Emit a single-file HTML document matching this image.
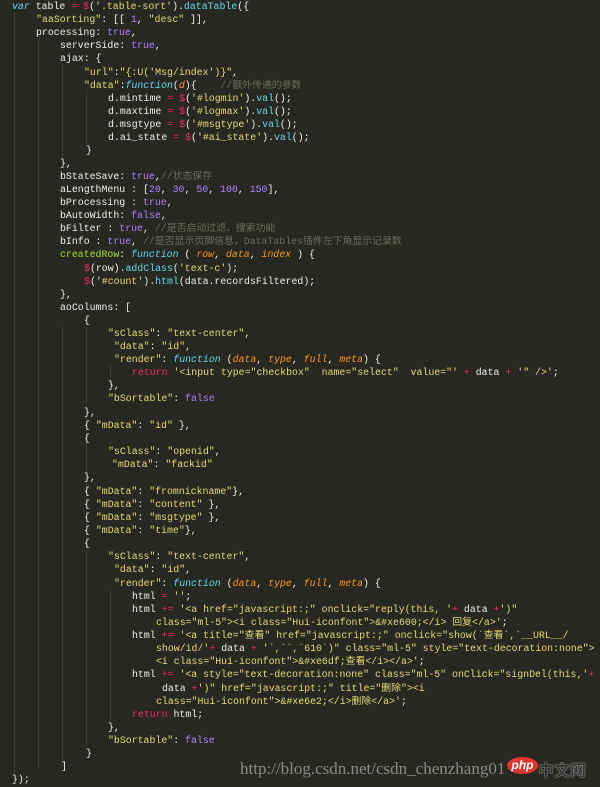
<!DOCTYPE html>
<html><head><meta charset="utf-8"><style>
html,body{margin:0;padding:0;}
body{width:600px;height:787px;background:#272822;overflow:hidden;position:relative;font-family:"Liberation Mono","Noto Sans CJK SC",monospace;font-size:9.9px;color:#f0f0e8;}
.l{position:absolute;white-space:pre;height:13px;line-height:13px;}
.k{color:#66d9ef;font-style:italic}
.f{color:#66d9ef}
.s{color:#e6db74}
.n{color:#ae81ff}
.o{color:#f92672}
.c{color:#6f6c5e}
.p{color:#fd971f;font-style:italic}
.g{color:#a6e22e}
.guide{position:absolute;width:1px;background:#3a3b35;}
.wm{position:absolute;left:240px;top:759px;font-family:"Liberation Serif",serif;font-size:17px;color:#8a8a86;white-space:pre;}
</style></head><body>
<div class="guide" style="left:14px;top:12px;height:764px"></div>
<div class="guide" style="left:38px;top:38px;height:730px"></div>
<div class="guide" style="left:62px;top:64px;height:95px"></div>
<div class="guide" style="left:86px;top:90px;height:55px"></div>
<div class="guide" style="left:62px;top:326px;height:440px"></div>
<div class="guide" style="left:86px;top:326px;height:420px"></div>
<div class="guide" style="left:110px;top:365px;height:20px"></div>
<div class="guide" style="left:110px;top:590px;height:130px"></div>

<div class="l" style="left:12px;top:0px"><span class="k">var</span> table <span class="o">=</span> <span class="o">$</span>(<span class="s">'.table-sort'</span>).<span class="f">dataTable</span>({</div>
<div class="l" style="left:36px;top:13px"><span class="s">"aaSorting"</span>: [[ <span class="n">1</span>, <span class="s">"desc"</span> ]],</div>
<div class="l" style="left:36px;top:26px">processing: <span class="n">true</span>,</div>
<div class="l" style="left:60px;top:39px">serverSide: <span class="n">true</span>,</div>
<div class="l" style="left:60px;top:52px">ajax: {</div>
<div class="l" style="left:84px;top:66px"><span class="s">"url"</span>:<span class="s">"{:U('Msg/index')}"</span>,</div>
<div class="l" style="left:84px;top:79px"><span class="s">"data"</span>:<span class="k">function</span>(<span class="p">d</span>){    <span class="c">//额外传递的参数</span></div>
<div class="l" style="left:108px;top:92px">d.mintime <span class="o">=</span> <span class="o">$</span>(<span class="s">'#logmin'</span>).<span class="f">val</span>();</div>
<div class="l" style="left:108px;top:105px">d.maxtime <span class="o">=</span> <span class="o">$</span>(<span class="s">'#logmax'</span>).<span class="f">val</span>();</div>
<div class="l" style="left:108px;top:118px">d.msgtype <span class="o">=</span> <span class="o">$</span>(<span class="s">'#msgtype'</span>).<span class="f">val</span>();</div>
<div class="l" style="left:108px;top:131px">d.ai_state <span class="o">=</span> <span class="o">$</span>(<span class="s">'#ai_state'</span>).<span class="f">val</span>();</div>
<div class="l" style="left:86px;top:144px">}</div>
<div class="l" style="left:60px;top:157px">},</div>
<div class="l" style="left:60px;top:170px">bStateSave: <span class="n">true</span>,<span class="c">//状态保存</span></div>
<div class="l" style="left:60px;top:183px">aLengthMenu : [<span class="n">20</span>, <span class="n">30</span>, <span class="n">50</span>, <span class="n">100</span>, <span class="n">150</span>],</div>
<div class="l" style="left:60px;top:196px">bProcessing : <span class="n">true</span>,</div>
<div class="l" style="left:60px;top:209px">bAutoWidth: <span class="n">false</span>,</div>
<div class="l" style="left:60px;top:222px">bFilter : <span class="n">true</span>, <span class="c">//是否启动过滤、搜索功能</span></div>
<div class="l" style="left:60px;top:235px">bInfo : <span class="n">true</span>, <span class="c">//是否显示页脚信息，DataTables插件左下角显示记录数</span></div>
<div class="l" style="left:60px;top:248px"><span class="g">createdRow</span>: <span class="k">function</span> ( <span class="p">row</span>, <span class="p">data</span>, <span class="p">index</span> ) {</div>
<div class="l" style="left:84px;top:262px"><span class="o">$</span>(row).<span class="f">addClass</span>(<span class="s">'text-c'</span>);</div>
<div class="l" style="left:84px;top:275px"><span class="o">$</span>(<span class="s">'#count'</span>).<span class="f">html</span>(data.recordsFiltered);</div>
<div class="l" style="left:60px;top:288px">},</div>
<div class="l" style="left:60px;top:301px">aoColumns: [</div>
<div class="l" style="left:84px;top:314px">{</div>
<div class="l" style="left:108px;top:327px"><span class="s">"sClass"</span>: <span class="s">"text-center"</span>,</div>
<div class="l" style="left:114px;top:340px"><span class="s">"data"</span>: <span class="s">"id"</span>,</div>
<div class="l" style="left:114px;top:353px"><span class="s">"render"</span>: <span class="k">function</span> (<span class="p">data</span>, <span class="p">type</span>, <span class="p">full</span>, <span class="p">meta</span>) {</div>
<div class="l" style="left:132px;top:366px"><span class="o">return</span> <span class="s">'&lt;input type="checkbox"  name="select"  value="'</span> <span class="o">+</span> data <span class="o">+</span> <span class="s">'" /&gt;'</span>;</div>
<div class="l" style="left:108px;top:379px">},</div>
<div class="l" style="left:108px;top:392px"><span class="s">"bSortable"</span>: <span class="n">false</span></div>
<div class="l" style="left:84px;top:406px">},</div>
<div class="l" style="left:84px;top:419px">{ <span class="s">"mData"</span>: <span class="s">"id"</span> },</div>
<div class="l" style="left:84px;top:432px">{</div>
<div class="l" style="left:108px;top:445px"><span class="s">"sClass"</span>: <span class="s">"openid"</span>,</div>
<div class="l" style="left:112px;top:458px"><span class="s">"mData"</span>: <span class="s">"fackid"</span></div>
<div class="l" style="left:84px;top:471px">},</div>
<div class="l" style="left:84px;top:485px">{ <span class="s">"mData"</span>: <span class="s">"fromnickname"</span>},</div>
<div class="l" style="left:84px;top:498px">{ <span class="s">"mData"</span>: <span class="s">"content"</span> },</div>
<div class="l" style="left:84px;top:511px">{ <span class="s">"mData"</span>: <span class="s">"msgtype"</span> },</div>
<div class="l" style="left:84px;top:524px">{ <span class="s">"mData"</span>: <span class="s">"time"</span>},</div>
<div class="l" style="left:84px;top:537px">{</div>
<div class="l" style="left:108px;top:550px"><span class="s">"sClass"</span>: <span class="s">"text-center"</span>,</div>
<div class="l" style="left:114px;top:563px"><span class="s">"data"</span>: <span class="s">"id"</span>,</div>
<div class="l" style="left:114px;top:577px"><span class="s">"render"</span>: <span class="k">function</span> (<span class="p">data</span>, <span class="p">type</span>, <span class="p">full</span>, <span class="p">meta</span>) {</div>
<div class="l" style="left:132px;top:590px">html <span class="o">=</span> <span class="s">''</span>;</div>
<div class="l" style="left:132px;top:603px">html <span class="o">+=</span> <span class="s">'&lt;a href="javascript:;" onclick="reply(this, '</span><span class="o">+</span> data <span class="o">+</span><span class="s">')"</span></div>
<div class="l" style="left:156px;top:616px"><span class="s">class="ml-5"&gt;&lt;i class="Hui-iconfont"&gt;&amp;#xe600;&lt;/i&gt; 回复&lt;/a&gt;'</span>;</div>
<div class="l" style="left:132px;top:629px">html <span class="o">+=</span> <span class="s">'&lt;a title="查看" href="javascript:;" onclick="show(`查看`,`__URL__/</span></div>
<div class="l" style="left:156px;top:642px"><span class="s">show/id/'</span><span class="o">+</span> data <span class="o">+</span> <span class="s">'`,``,`610`)" class="ml-5" style="text-decoration:none"&gt;</span></div>
<div class="l" style="left:156px;top:655px"><span class="s">&lt;i class="Hui-iconfont"&gt;&amp;#xe6df;查看&lt;/i&gt;&lt;/a&gt;'</span>;</div>
<div class="l" style="left:132px;top:668px">html <span class="o">+=</span> <span class="s">'&lt;a style="text-decoration:none" class="ml-5" onClick="signDel(this,'</span><span class="o">+</span></div>
<div class="l" style="left:162px;top:682px">data <span class="o">+</span><span class="s">')" href="javascript:;" title="删除"&gt;&lt;i</span></div>
<div class="l" style="left:156px;top:695px"><span class="s">class="Hui-iconfont"&gt;&amp;#xe6e2;&lt;/i&gt;删除&lt;/a&gt;'</span>;</div>
<div class="l" style="left:132px;top:708px"><span class="o">return</span> html;</div>
<div class="l" style="left:108px;top:721px">},</div>
<div class="l" style="left:108px;top:734px"><span class="s">"bSortable"</span>: <span class="n">false</span></div>
<div class="l" style="left:86px;top:747px">}</div>
<div class="l" style="left:61px;top:760px">]</div>
<div class="l" style="left:12px;top:773px">});</div>

<div class="wm">http://blog.csdn.net/csdn_chenzhang01</div>
<div style="position:absolute;left:507px;top:757px;width:31px;height:17px;border-radius:50%;background:#e0352b;color:#fff;font-family:'Liberation Sans',sans-serif;font-weight:bold;font-style:italic;font-size:12px;line-height:17px;text-align:center;">php</div>
<div style="position:absolute;left:538px;top:757px;font-family:'Liberation Sans','Noto Sans CJK SC',sans-serif;font-size:16px;color:#333;font-weight:bold;white-space:pre;text-shadow:0 0 1px #ccc,0 0 1px #ccc;">中文网</div>
</body></html>
